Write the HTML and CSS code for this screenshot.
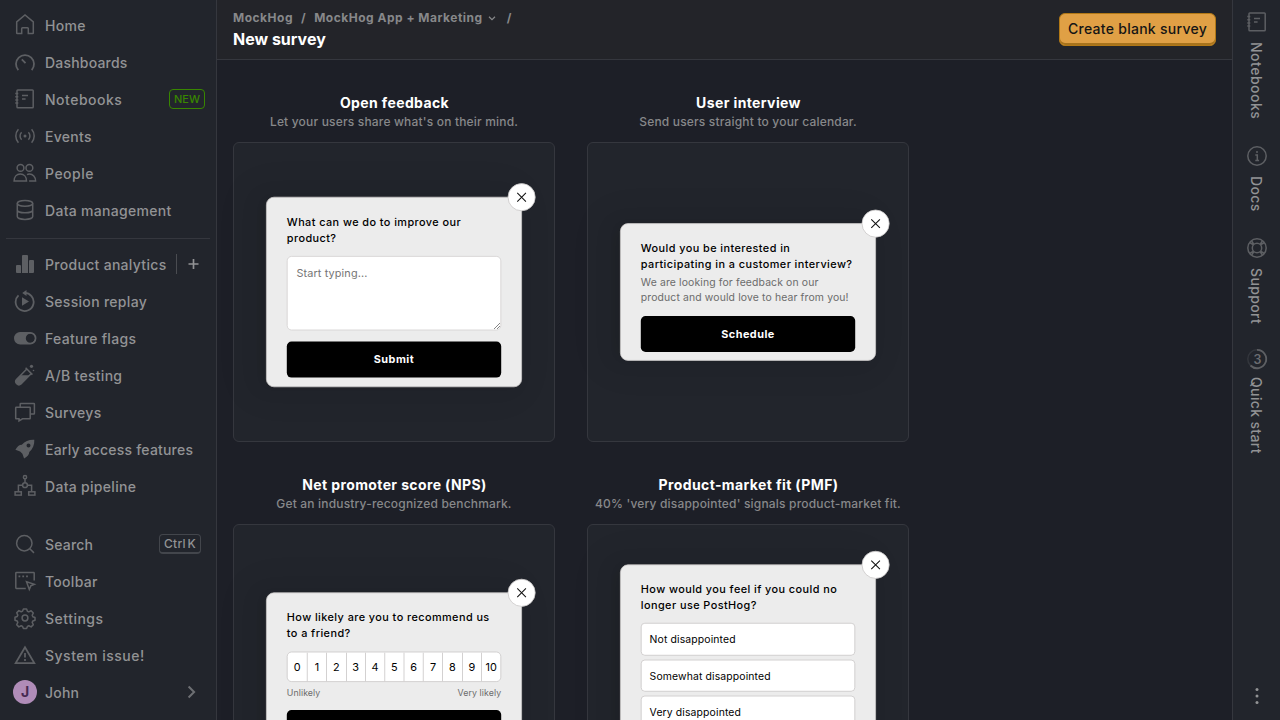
FILE: index.html
```html
<!DOCTYPE html>
<html lang="en">
<head>
<meta charset="utf-8">
<title>New survey</title>
<link rel="stylesheet" href="styles.css">
</head>
<body>
<div class="app">
  <nav class="sidebar">
    <ul class="nav">
      <li><svg class="ico" viewBox="0 0 24 24"><path d="M3.700 8.800 12 1.900l8.300 6.900V20a.5.5 0 0 1-.5.5h-4.500v-5a.8.8 0 0 0-.8-.8H9.500a.8.8 0 0 0-.8.8v5H4.200a.5.5 0 0 1-.5-.5z"/></svg><span>Home</span></li>
      <li><svg class="ico" viewBox="0 0 24 24"><path class="w2" d="M5.300 20.100a9 9 0 1 1 13.400 0M8.800 9.300l3.700 3.900"/></svg><span class="tight">Dashboards</span></li>
      <li><svg class="ico" viewBox="0 0 24 24"><rect x="4" y="3" width="16.200" height="17.800" rx=".8"/><path d="M2.300 6.500h3M2.300 9.700h3M2.300 12.900h3M2.300 16.100h3M9 8.600h6M9 12h3.600"/></svg><span class="loose">Notebooks</span><b class="tag">NEW</b></li>
      <li><svg class="ico" viewBox="0 0 24 24"><circle class="f" cx="12" cy="12" r="1.500"/><path d="M8.600 8.200a5.500 5.500 0 0 0 0 7.600M15.400 8.200a5.500 5.500 0 0 1 0 7.600M5.400 5.300a10 10 0 0 0 0 13.400M18.600 5.300a10 10 0 0 1 0 13.400"/></svg><span>Events</span></li>
      <li><svg class="ico" viewBox="0 0 24 24"><circle cx="7.500" cy="6.900" r="3.400"/><circle cx="16.400" cy="6.900" r="3.400"/><path d="M1.100 20.100c0-4 2.500-7 6.200-7s6.200 3 6.200 7zM14 13.600c.8-.4 1.600-.5 2.400-.5 3.500 0 6.200 3 6.200 7h-6.500"/></svg><span class="loose">People</span></li>
      <li><svg class="ico" viewBox="0 0 24 24"><ellipse cx="12" cy="5.300" rx="7.700" ry="2.900"/><path d="M4.300 5.300v13.200c0 1.600 3.400 2.900 7.700 2.900s7.700-1.300 7.700-2.900V5.300M4.300 11.900c0 1.600 3.400 2.900 7.700 2.900s7.700-1.300 7.700-2.900"/></svg><span>Data management</span></li>
    </ul>
    <hr>
    <ul class="nav products">
      <li><svg class="ico" viewBox="0 0 24 24"><path class="f" d="M3 14a1 1 0 0 1 1-1h3a1 1 0 0 1 1 1v7H4a1 1 0 0 1-1-1zM9 4a1 1 0 0 1 1-1h4a1 1 0 0 1 1 1v17H9zM16 9a1 1 0 0 1 1-1h3a1 1 0 0 1 1 1v11a1 1 0 0 1-1 1h-4z"/></svg><span>Product analytics</span><svg class="plus" viewBox="0 0 24 24"><path d="M12 6v12M6 12h12"/></svg></li>
      <li><svg class="ico" viewBox="0 0 24 24"><path class="w2" d="M11 4a9 9 0 1 1-5.500 2.400"/><path class="f" d="M13.500 1v6L9.200 4zM9 8.300l7 4.200-7 4.200z"/></svg><span>Session replay</span></li>
      <li><svg class="ico" viewBox="0 0 24 24"><rect x="1.800" y="6.800" width="20.900" height="10.900" rx="5.450"/><path class="f" fill-rule="evenodd" d="M7.200 6.500h10a5.700 5.700 0 0 1 0 11.400h-10a5.700 5.700 0 0 1 0-11.400zM17.300 7.700a4.500 4.500 0 1 0 0 9 4.500 4.500 0 0 0 0-9z"/></svg><span>Feature flags</span></li>
      <li><svg class="ico" viewBox="0 0 24 24"><path d="M12.600 4.800l6.800 6.800M13.800 6L3.500 16.500a3.200 3.200 0 0 0 4.500 4.500L18.300 10.500"/><path class="f" d="M8 12.200h8.500L8 21a3.200 3.200 0 0 1-4.500-4.500z"/><circle class="f" cx="18.500" cy="3.300" r="1.600"/><circle class="f" cx="20.500" cy="7.500" r=".8"/></svg><span>A/B testing</span></li>
      <li><svg class="ico" viewBox="0 0 24 24"><path d="M7.200 7V4a.6.6 0 0 1 .6-.6h13a.6.6 0 0 1 .6.6v9.400a.6.6 0 0 1-.6.6h-3.600"/><path d="M3.300 7.200h13.300a.6.6 0 0 1 .6.6v10.400a.6.6 0 0 1-.6.600H9.500L6 20.900v-2.100H3.300a.6.6 0 0 1-.6-.6V7.800a.6.6 0 0 1 .6-.6z"/></svg><span>Surveys</span></li>
      <li><svg class="ico" viewBox="0 0 24 24"><path class="f" fill-rule="evenodd" d="M21.300 2.700c.3 5-1.400 9-5 12.300 0 2.600-1.800 4.800-5.200 6.400l-1.700-4.700-2.300-2.200-4.700-1.700c1.700-3.300 3.800-5.100 6.400-5.100 3.400-3.700 7.400-5.300 12.500-5zM15.500 6.600a2 2 0 1 0 0 4 2 2 0 0 0 0-4z"/></svg><span class="tight">Early access features</span></li>
      <li><svg class="ico" viewBox="0 0 24 24"><circle cx="12" cy="3.200" r="1.600"/><circle cx="12" cy="11.200" r="2.400"/><path d="M12 4.800v4M9.600 11.300H5.400v6.400M14.400 11.300h4.200v6.400"/><rect x="2.100" y="17.800" width="6.200" height="3.300"/><rect x="15.700" y="17.800" width="6.200" height="3.300"/></svg><span>Data pipeline</span></li>
    </ul>
    <ul class="nav bottom">
      <li><svg class="ico" viewBox="0 0 24 24"><circle cx="11.300" cy="11.200" r="7.700"/><path d="M16.800 16.700l4.200 4.200"/></svg><span class="tight">Search</span><kbd>Ctrl K</kbd></li>
      <li><svg class="ico" viewBox="0 0 24 24"><path d="M12.800 19.400H3.400a.6.6 0 0 1-.6-.6V4.200a.6.6 0 0 1 .6-.6h17.200a.6.6 0 0 1 .6.6v7.200M13.500 12.700l7.900 2.600-3.600 1.600-1.500 3.600z"/><path class="f" d="M5.500 6.500h1.800v1.800H5.500zM9.300 6.500h1.800v1.800H9.300zM13.100 6.500h1.800v1.800h-1.800z"/></svg><span>Toolbar</span></li>
      <li><svg class="ico" viewBox="0 0 24 24"><circle cx="12" cy="12" r="2.900"/><path d="M10.400 2.900h3.200l.8 2.400 1.400.6 2.300-1.100 2.200 2.200-1.100 2.300.6 1.400 2.200.8v2.700l-2.200.8-.6 1.400 1.100 2.300-2.200 2.200-2.300-1.100-1.400.6-.8 2.200h-3.200l-.8-2.200-1.400-.6-2.300 1.100-2.200-2.200 1.100-2.300-.6-1.400-2.200-.8v-2.900l2.200-.8.600-1.400-1.100-2.300 2.200-2.200 2.300 1.100 1.400-.6z" stroke-linejoin="round"/></svg><span class="loose">Settings</span></li>
      <li><svg class="ico" viewBox="0 0 24 24"><path class="w2" d="M12 4.300L2.700 20.100h18.600z"/><path class="w2" d="M12 10v4.500M12 16v2"/></svg><span class="loose">System issue!</span></li>
      <li><i class="avatar">J</i><span class="tight">John</span><svg class="chev" viewBox="0 0 24 24"><path d="M9.600 6.500l5.500 5.500-5.500 5.500"/></svg></li>
    </ul>
  </nav>

  <main class="main">
    <header class="top">
      <div>
        <div class="crumbs"><span>MockHog</span><span>/</span><span>MockHog App + Marketing</span><svg viewBox="0 0 10 10"><path d="M2 3.700l3 2.900 3-2.900"/></svg><span>/</span></div>
        <h1>New survey</h1>
      </div>
      <button class="primary">Create blank survey</button>
    </header>
    <div class="grid">
      <section class="tpl">
        <h2>Open feedback</h2>
        <p class="sub">Let your users share what's on their mind.</p>
        <div class="card"><div class="popup feedback">
          <div class="close"><svg viewBox="0 0 12 12"><path d="M1 1l10 10M11 1L1 11"/></svg></div>
          <div class="q">What can we do to improve our product?</div>
          <textarea placeholder="Start typing..."></textarea>
          <div class="submit">Submit</div>
        </div></div>
      </section>
      <section class="tpl">
        <h2>User interview</h2>
        <p class="sub">Send users straight to your calendar.</p>
        <div class="card"><div class="popup">
          <div class="close"><svg viewBox="0 0 12 12"><path d="M1 1l10 10M11 1L1 11"/></svg></div>
          <div class="q">Would you be interested in participating in a customer interview?</div>
          <div class="desc">We are looking for feedback on our product and would love to hear from you!</div>
          <div class="submit">Schedule</div>
        </div></div>
      </section>
      <section class="tpl">
        <h2>Net promoter score (NPS)</h2>
        <p class="sub">Get an industry-recognized benchmark.</p>
        <div class="card"><div class="popup nps">
          <div class="close"><svg viewBox="0 0 12 12"><path d="M1 1l10 10M11 1L1 11"/></svg></div>
          <div class="q">How likely are you to recommend us to&nbsp;a&nbsp;friend?</div>
          <div class="ratings"><span>0</span><span>1</span><span>2</span><span>3</span><span>4</span><span>5</span><span>6</span><span>7</span><span>8</span><span>9</span><span>10</span></div>
          <div class="scale"><span>Unlikely</span><span>Very likely</span></div>
          <div class="submit"></div>
        </div></div>
      </section>
      <section class="tpl">
        <h2>Product-market fit (PMF)</h2>
        <p class="sub">40% 'very disappointed' signals product-market fit.</p>
        <div class="card"><div class="popup pmf">
          <div class="close"><svg viewBox="0 0 12 12"><path d="M1 1l10 10M11 1L1 11"/></svg></div>
          <div class="q">How would you feel if you could no longer use PostHog?</div>
          <div class="choices"><div>Not disappointed</div><div>Somewhat disappointed</div><div>Very disappointed</div></div>
          <div class="submit"></div>
        </div></div>
      </section>
    </div>
  </main>

  <aside class="rail">
    <div class="tab"><svg class="ico" viewBox="0 0 24 24"><rect x="4" y="3" width="16.200" height="17.800" rx=".8"/><path d="M2.300 6.500h3M2.300 9.700h3M2.300 12.900h3M2.300 16.100h3M9 8.600h6M9 12h3.600"/></svg><span class="loose">Notebooks</span></div>
    <div class="tab"><svg class="ico" viewBox="0 0 24 24"><circle cx="12" cy="12" r="9.200"/><path d="M10.300 11h2v5.500M10.300 16.500h3.800"/><circle class="f" cx="12" cy="8" r="1"/></svg><span>Docs</span></div>
    <div class="tab"><svg class="ico" viewBox="0 0 24 24"><circle cx="12" cy="12" r="9.200"/><circle cx="12" cy="12" r="4.700"/><path d="M4.700 6.500l3.800 2.400M6.500 4.700l2.400 3.800M19.300 6.500l-3.800 2.400M17.500 4.700l-2.400 3.800M4.700 17.500l3.800-2.400M6.500 19.300l2.400-3.800M19.300 17.500l-3.800-2.400M17.500 19.300l-2.400-3.800"/></svg><span>Support</span></div>
    <div class="tab quick"><svg class="ico" viewBox="0 0 24 24"><circle class="dim" cx="12" cy="12" r="9.200"/><path class="w2" d="M12 2.800a9.200 9.200 0 1 1-6.500 15.700"/><text x="12.500" y="16.500">3</text></svg><span>Quick start</span></div>
    <svg class="ico dots" viewBox="0 0 24 24"><circle class="f" cx="12" cy="5.500" r="1.500"/><circle class="f" cx="12" cy="12" r="1.500"/><circle class="f" cx="12" cy="18.500" r="1.500"/></svg>
  </aside>
</div>
</body>
</html>
```
FILE: styles.css
```css
* { box-sizing: border-box; }
body { margin: 0; height: 720px; overflow: hidden; background: #1d1f27; color: #fff; font: 14px/20px Inter, sans-serif; }
h1, h2, p, ul { margin: 0; padding: 0; }
.app { display: flex; height: 720px; }

.sidebar { width: 217px; flex: none; display: flex; flex-direction: column; background: #22252c; border-right: 1px solid #35373e; padding: 7px 6px 10px; }
.nav { list-style: none; display: flex; flex-direction: column; gap: 1px; }
.nav li { display: flex; align-items: center; height: 36px; padding: 0 5px 0 7px; color: #929395; font-weight: 500; }
.nav li > span { flex: 1; margin-left: 8px; padding-top: 1px; letter-spacing: .3px; white-space: nowrap; }
.nav li > .tight { letter-spacing: .2px; }
.nav li > .loose { letter-spacing: .5px; }
.sidebar hr { width: 100%; border: 0; border-top: 1px solid #35373e; margin: 10px 0 7px; }
.bottom { margin-top: auto; }
.ico { width: 24px; height: 24px; flex: none; fill: none; stroke: #5d5f63; stroke-width: 1.5; }
.ico .w2 { stroke-width: 1.8; }
.ico .f { fill: #5d5f63; stroke: none; }
.ico .dim { stroke: #33363c; }
.ico text { fill: #6b6d71; stroke: none; font: 600 12.500px Inter, sans-serif; text-anchor: middle; }
.tag { border: 1px solid #388600; border-radius: 4px; color: #388600; font-size: 11px; font-weight: 500; line-height: 18px; padding: 0 4px; }
.plus { width: 34px; height: 20px; border-left: 1px solid #4a4c51; fill: none; stroke: #929395; stroke-width: 2; margin-right: -5px; }
kbd { border: 1px solid #43464c; border-bottom-width: 2px; border-radius: 4px; font: 500 12px/17px Inter, sans-serif; padding: 0 4px; margin-right: 4px; color: #929395; letter-spacing: .3px; word-spacing: -2px; }
.avatar { width: 24px; height: 24px; border-radius: 50%; background: #b08cb8; color: #472a52; font: 700 14px/24px Inter, sans-serif; text-align: center; }
.chev { width: 24px; height: 24px; fill: none; stroke: #6d6f73; stroke-width: 2; margin-right: 2px; }

.main { flex: 1; min-width: 0; overflow: hidden; }
.top { height: 60px; display: flex; justify-content: space-between; align-items: flex-start; background: #232429; border-bottom: 1px solid #35373e; padding: 10px 16px 0; }
.crumbs { display: flex; align-items: center; gap: 8px; font-size: 12px; line-height: 16px; font-weight: 700; color: #87888a; letter-spacing: .5px; }
.crumbs svg { width: 10px; height: 10px; fill: none; stroke: #87888a; stroke-width: 1.2; margin: 0 2px 0 -4px; }
h1 { font-size: 16px; line-height: 24px; font-weight: 700; margin-top: 1px; }
.primary { margin-top: 3px; width: 157px; height: 33px; padding: 0 0 2px; border: 1px solid #b17816; border-radius: 6px; background: #e0a045; box-shadow: inset 0 -2px #a8731c; color: #151515; font: 500 14px/20px Inter, sans-serif; letter-spacing: .28px; white-space: nowrap; }
.grid { display: grid; grid-template-columns: 322px 322px; column-gap: 32px; padding: 32px 16px; row-gap: 32px; }
.tpl { height: 350px; text-align: center; }
h2 { font-size: 14px; line-height: 22px; font-weight: 700; letter-spacing: .38px; padding-left: 1px; }
.sub { font-size: 12px; line-height: 16px; font-weight: 500; color: #87888a; margin-bottom: 12px; letter-spacing: .18px; white-space: nowrap; }
.card { height: 300px; display: flex; align-items: center; justify-content: center; background: #22252c; border: 1px solid #35373e; border-radius: 6px; }

.popup { position: relative; flex: none; width: 320px; padding: 20px 25px 10px; background: #ececec; border: 1px solid #c9c6c6; border-radius: 10px; color: #000; text-align: left; transform: scale(.8); box-shadow: -6px 0 16px -8px rgba(0,0,0,.08), -9px 0 28px rgba(0,0,0,.05), -12px 0 48px 16px rgba(0,0,0,.03); }
.feedback { padding-bottom: 11px; }
.nps { padding-bottom: 11px; }
.pmf { padding-bottom: 10px; }
.close { position: absolute; top: -18px; right: -17.500px; width: 35px; height: 35px; border: 1px solid #c9c6c6; border-radius: 50%; background: #fff; display: grid; place-items: center; }
.close svg { width: 13px; height: 13px; fill: none; stroke: #111; stroke-width: 1.2; }
.q { font-size: 13.600px; line-height: 20px; font-weight: 500; letter-spacing: .54px; margin-right: -4px; }
.desc { font-size: 13px; line-height: 19px; color: #6b6b6b; margin-top: 3px; letter-spacing: .17px; margin-right: -4px; }
textarea { display: block; width: 100%; height: 93px; margin-top: 13px; padding: 10px 11px; border: 1px solid #d3d1d1; border-radius: 6px; background: #fff; font: 13.600px/20px Inter, sans-serif; letter-spacing: .15px; }
.submit { height: 45px; margin-top: 14px; border-radius: 6px; background: #000; color: #fff; font-size: 13.600px; font-weight: 700; line-height: 45px; text-align: center; letter-spacing: .6px; }
.ratings { display: grid; grid-template-columns: repeat(11, 1fr); height: 38px; margin-top: 13px; overflow: hidden; border: 1px solid #c9c6c6; border-radius: 6px; background: #fff; font-size: 13.600px; line-height: 37px; text-align: center; }
.ratings span + span { border-left: 1px solid #c9c6c6; }
.scale { display: flex; justify-content: space-between; font-size: 11px; line-height: 14px; color: #6b6b6b; margin-top: 7px; letter-spacing: .1px; }
.choices { display: grid; gap: 5px; margin-top: 12px; font-size: 13px; letter-spacing: .17px; }
.choices div { height: 40.500px; line-height: 39px; padding: 0 10px; background: #fff; border: 1px solid #c9c6c6; border-radius: 5px; }

.rail { width: 48px; flex: none; display: flex; flex-direction: column; align-items: center; gap: 24px; padding: 10px 0 12px; background: #22252c; border-left: 1px solid #35373e; }
.tab { display: flex; flex-direction: column; align-items: center; gap: 8px; }
.tab:first-child { margin-bottom: 1px; }
.quick { gap: 6px; margin-top: -1px; }
.tab span { writing-mode: vertical-rl; color: #929395; font-weight: 500; letter-spacing: .35px; margin-right: 1px; }
.tab .loose { letter-spacing: .5px; }
.dots { margin-top: auto; }
.dots .f { fill: #929395; }
```
